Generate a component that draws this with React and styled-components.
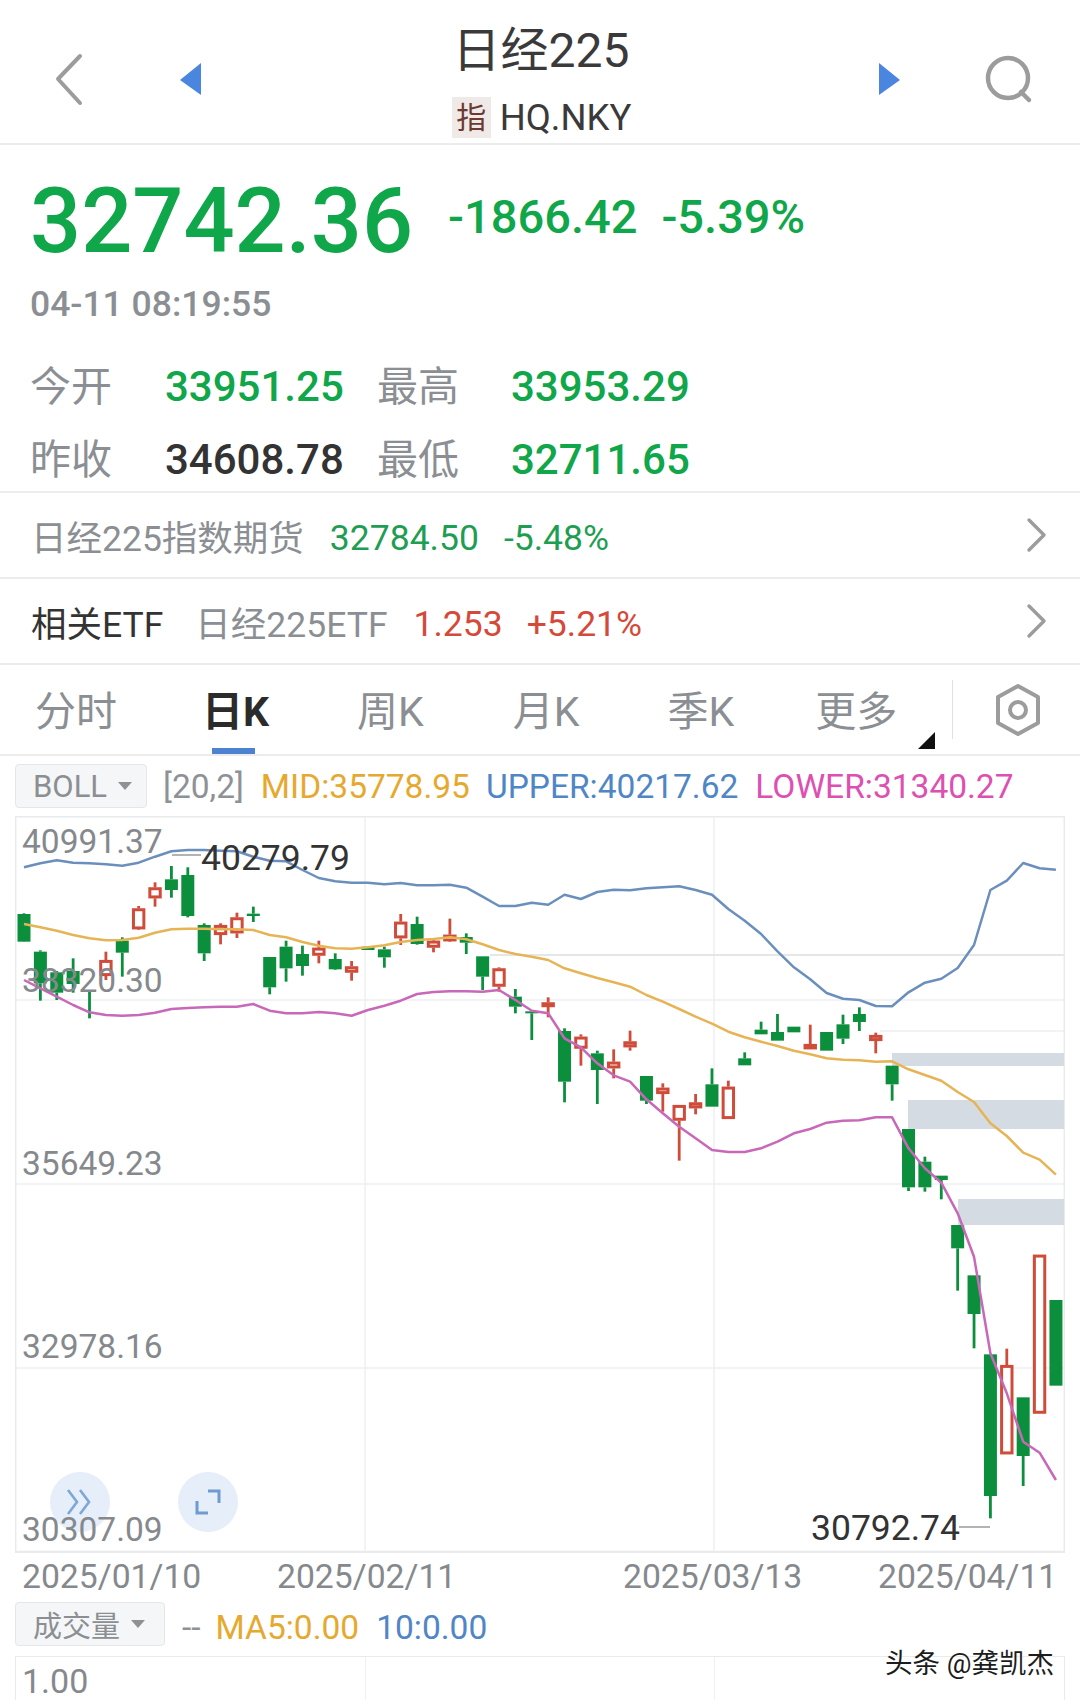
import React from 'react'
import styled, { createGlobalStyle } from 'styled-components'

const GREEN = '#10a64a'
const RED = '#d5493a'
const GREY = '#8b8f93'
const FONT = `Roboto, "Noto Sans CJK SC", sans-serif`

const GlobalStyle = createGlobalStyle`
  html, body { margin: 0; padding: 0; background: #fff; }
  body { font-family: ${FONT}; }
`

// chart values are read at 3x: real y = 810 + v / 3, one entry per trading day
const toX = (i) => 24 + i * 16.38
const toY = (v) => 810 + v / 3

// [colour, high, body top, body bottom, low]
const candles = [
  ['g', 310, 312, 395, 396], ['g', 421, 425, 520, 572], ['g', 483, 487, 548, 570], ['g', 445, 483, 522, 548],
  ['g', 540, 540, 546, 625], ['r', 425, 450, 498, 510], ['g', 382, 392, 428, 500], ['r', 288, 295, 358, 360],
  ['r', 217, 232, 265, 290], ['g', 168, 208, 240, 263], ['g', 172, 195, 318, 322], ['g', 340, 345, 430, 453],
  ['r', 340, 345, 375, 403], ['r', 308, 322, 370, 384], ['g', 290, 311, 318, 336], ['g', 441, 441, 532, 553],
  ['g', 392, 410, 475, 515], ['g', 407, 432, 468, 497], ['r', 392, 413, 437, 460], ['g', 430, 447, 478, 480],
  ['r', 453, 469, 488, 512], ['g', 410, 410, 420, 420], ['g', 410, 418, 442, 473], ['r', 312, 335, 385, 405],
  ['g', 320, 342, 402, 404], ['r', 385, 392, 413, 427], ['r', 326, 374, 394, 396], ['g', 370, 381, 398, 432],
  ['g', 439, 439, 500, 540], ['r', 472, 475, 530, 545], ['g', 537, 560, 590, 610], ['g', 604, 604, 610, 690],
  ['r', 562, 577, 590, 622], ['g', 655, 663, 815, 877], ['r', 673, 680, 716, 767], ['g', 722, 730, 780, 882],
  ['r', 718, 755, 775, 805], ['r', 662, 694, 712, 722], ['g', 798, 798, 872, 882], ['r', 820, 833, 852, 905],
  ['r', 885, 885, 932, 1052], ['r', 852, 877, 895, 913], ['g', 775, 823, 890, 890], ['r', 812, 830, 927, 927],
  ['g', 727, 745, 766, 766], ['g', 635, 659, 673, 673], ['g', 612, 666, 692, 692], ['g', 650, 650, 667, 667],
  ['r', 644, 702, 718, 718], ['g', 666, 666, 722, 722], ['g', 614, 643, 686, 702], ['g', 592, 612, 636, 663],
  ['r', 668, 675, 693, 730], ['g', 767, 767, 823, 872], ['g', 957, 957, 1132, 1143], ['g', 1040, 1055, 1132, 1145],
  ['g', 1097, 1097, 1110, 1168], ['g', 1245, 1245, 1315, 1442], ['g', 1396, 1396, 1512, 1615], ['g', 1633, 1633, 2058, 2125],
  ['r', 1616, 1665, 1933, 1933], ['g', 1762, 1762, 1938, 2028], ['r', 1334, 1334, 1811, 1811], ['g', 1470, 1470, 1727, 1727],
]

const upper = [
  172, 160, 151, 158, 160, 163, 167, 158, 140, 124, 120, 120, 122, 124, 140, 152,
  154, 180, 204, 214, 218, 218, 223, 219, 226, 226, 224, 233, 260, 288, 288, 278,
  284, 254, 267, 246, 239, 241, 235, 232, 229, 240, 254, 297, 332, 372, 424, 472,
  508, 549, 566, 570, 588, 589, 547, 518, 506, 474, 405, 240, 212, 159, 175, 179,
]
const mid = [
  342, 352, 362, 375, 385, 391, 390, 383, 368, 358, 356, 356, 358, 358, 360, 375,
  382, 396, 407, 415, 416, 412, 406, 396, 390, 387, 382, 388, 403, 420, 432, 440,
  450, 475, 490, 504, 517, 530, 555, 575, 597, 620, 641, 665, 682, 695, 708, 722,
  733, 745, 749, 751, 755, 754, 778, 795, 812, 846, 876, 940, 978, 1028, 1049, 1094,
]
const lower = [
  510, 535, 560, 585, 607, 615, 617, 615, 608, 597, 594, 592, 590, 590, 582, 602,
  610, 610, 606, 610, 617, 600, 587, 572, 552, 546, 544, 544, 545, 540, 570, 602,
  610, 685, 712, 760, 796, 815, 868, 910, 950, 985, 1020, 1026, 1026, 1015, 995, 970,
  957, 938, 932, 931, 922, 922, 1015, 1075, 1118, 1210, 1340, 1630, 1750, 1895, 1928, 2010,
]

const pointsOf = (values) => values.map((v, i) => `${toX(i).toFixed(1)},${toY(v).toFixed(1)}`).join(' ')

const axisLabels = [
  ['40991.37', 853], ['38320.30', 992], ['35649.23', 1175], ['32978.16', 1358], ['30307.09', 1541],
]

function Candle({ data, index }) {
  const [colour, high, top, bottom, low] = data
  const x = toX(index)
  const green = colour === 'g'
  const stroke = green ? '#0b8f3d' : '#cf4b3a'
  return (
    <g>
      <line x1={x} x2={x} y1={toY(high)} y2={toY(top)} stroke={stroke} strokeWidth="2.8" />
      <line x1={x} x2={x} y1={toY(bottom)} y2={toY(low)} stroke={stroke} strokeWidth="2.8" />
      {green
        ? <rect x={x - 6.5} y={toY(top)} width="13" height={Math.max(toY(bottom) - toY(top), 2)} fill={stroke} />
        : <rect x={x - 5.2} y={toY(top) + 1.4} width="10.4" height={Math.max(toY(bottom) - toY(top) - 2.8, 2)} fill="#fff" stroke={stroke} strokeWidth="3" />}
    </g>
  )
}

function MainChart() {
  return (
    <Chart viewBox="15 816 1050 737">
      <g stroke="#eef0f2" strokeWidth="1.5" fill="none">
        <path d="M365 816V1552M714 816V1552" />
        <path d="M15 1000H1065M15 1184H1065M15 1368H1065M880 1031H1065" />
      </g>
      <path d="M15.7 816.7H1064.3V1551.5H15.7Z" fill="none" stroke="#e8eaec" strokeWidth="1.5" />
      <path d="M15 1552H1065" stroke="#e8eaec" strokeWidth="2" />
      <path d="M490 955H1065" stroke="#e4e6e8" strokeWidth="2" />
      <g fill="#d5dbe2">
        <rect x="892" y="1053" width="172" height="13" />
        <rect x="908" y="1100" width="156" height="29" />
        <rect x="958" y="1199" width="106" height="26" />
      </g>
      {candles.map((c, i) => <Candle key={i} data={c} index={i} />)}
      <g fill="none" strokeWidth="2.5" strokeLinejoin="round">
        <polyline points={pointsOf(upper)} stroke="#6b8fbd" />
        <polyline points={pointsOf(mid)} stroke="#e6b455" />
        <polyline points={pointsOf(lower)} stroke="#c868b8" />
      </g>
      {axisLabels.map(([label, y]) => (
        <AxisText key={label} x="22" y={y}>{label}</AxisText>
      ))}
      <path d="M172 855H201M959 1527H990" stroke="#9a9a9a" strokeWidth="1.5" />
      <PeakText x="201" y="870">40279.79</PeakText>
      <PeakText x="811" y="1540">30792.74</PeakText>
    </Chart>
  )
}

export default function App() {
  return (
    <>
      <GlobalStyle />
      <Page>
        <Header>
          <svg width="44" height="64" viewBox="0 0 44 64">
            <path d="M31 9 9 32l22 24" fill="none" stroke="#9c9c9c" strokeWidth="4" strokeLinecap="round" strokeLinejoin="round" />
          </svg>
          <svg width="24" height="34" viewBox="0 0 24 34">
            <path d="M23 1V33L2 18Z" fill="#4a86e0" />
          </svg>
          <TitleBlock>
            <Title>日经225</Title>
            <Subtitle><TypeBadge>指</TypeBadge>HQ.NKY</Subtitle>
          </TitleBlock>
          <svg width="24" height="34" viewBox="0 0 24 34">
            <path d="M1 1V33L22 18Z" fill="#4a86e0" />
          </svg>
          <svg width="50" height="50" viewBox="0 0 50 50">
            <g fill="none" stroke="#9c9c9c" strokeWidth="4.5" strokeLinecap="round">
              <ellipse cx="24" cy="24" rx="20" ry="20" />
              <path d="M37 38l8 8" />
            </g>
          </svg>
        </Header>

        <Quote>
          <PriceRow>
            <Price>32742.36</Price>
            <Change>-1866.42</Change>
            <Change>-5.39%</Change>
          </PriceRow>
          <Stamp>04-11 08:19:55</Stamp>
          <Stats>
            <StatLabel>今开</StatLabel>
            <StatValue>33951.25</StatValue>
            <StatLabel>最高</StatLabel>
            <StatValue>33953.29</StatValue>
            <StatLabel>昨收</StatLabel>
            <StatValue $flat>34608.78</StatValue>
            <StatLabel>最低</StatLabel>
            <StatValue>32711.65</StatValue>
          </Stats>
        </Quote>

        <LinkRow>
          <LinkName>日经225指数期货</LinkName>
          <LinkNumber $color="#1e9e52" $left={26}>32784.50</LinkNumber>
          <LinkNumber $color="#1e9e52" $left={25}>-5.48%</LinkNumber>
          <Arrow />
        </LinkRow>
        <LinkRow>
          <LinkName $dark>相关ETF</LinkName>
          <LinkName $left={32}>日经225ETF</LinkName>
          <LinkNumber $color={RED} $left={26}>1.253</LinkNumber>
          <LinkNumber $color={RED} $left={24}>+5.21%</LinkNumber>
          <Arrow />
        </LinkRow>

        <TabBar>
          <Tab $left={35}>分时</Tab>
          <Tab $left={85} $active>日K</Tab>
          <Tab $left={88}>周K</Tab>
          <Tab $left={89}>月K</Tab>
          <Tab $left={88}>季K</Tab>
          <MoreTab $left={81}>更多</MoreTab>
          <TabDivider />
          <SettingsIcon width="46" height="54" viewBox="0 0 46 54">
            <path d="M23 3 43 14V40L23 51 3 40V14Z" fill="none" stroke="#9c9c9c" strokeWidth="4" strokeLinejoin="round" />
            <circle cx="23" cy="27" r="8" fill="none" stroke="#9c9c9c" strokeWidth="4" />
          </SettingsIcon>
        </TabBar>

        <IndicatorRow>
          <Chip $width={132}>BOLL<Caret /></Chip>
          <Legend $color="#8e9296" $left={16}>[20,2]</Legend>
          <Legend $color="#e6a92f" $left={17}>MID:35778.95</Legend>
          <Legend $color="#4f86c6" $left={16}>UPPER:40217.62</Legend>
          <Legend $color="#dd50b2" $left={17}>LOWER:31340.27</Legend>
        </IndicatorRow>

        <ChartPane>
          <MainChart />
          <RoundButton $left={35}>
            <svg width="30" height="28" viewBox="0 0 30 28">
              <path d="M3 2l9 12-9 12M15 2l9 12-9 12" fill="none" stroke="#7ea7d8" strokeWidth="2.6" />
            </svg>
          </RoundButton>
          <RoundButton $left={163}>
            <svg width="26" height="26" viewBox="0 0 26 26">
              <path d="M13 2h11v12M13 24H2V12" fill="none" stroke="#6f9bd0" strokeWidth="3" />
            </svg>
          </RoundButton>
        </ChartPane>

        <DateAxis>
          <span>2025/01/10</span>
          <span>2025/02/11</span>
          <span>2025/03/13</span>
          <span>2025/04/11</span>
        </DateAxis>

        <VolumeRow>
          <Chip $width={150} $cjk>成交量<Caret /></Chip>
          <Legend $color="#8e9296" $left={17}>--</Legend>
          <Legend $color="#e6a92f" $left={15}>MA5:0.00</Legend>
          <Legend $color="#4f86c6" $left={17}>10:0.00</Legend>
        </VolumeRow>

        <VolumePane>
          <VolumeCell>1.00</VolumeCell>
          <VolumeCell />
          <VolumeCell />
        </VolumePane>

        <Watermark>头条 @龚凯杰</Watermark>
      </Page>
    </>
  )
}

function Arrow() {
  return (
    <ArrowIcon width="24" height="36" viewBox="0 0 24 36">
      <path d="M4 3l15 15L4 33" fill="none" stroke="#9c9c9c" strokeWidth="3.4" strokeLinecap="round" strokeLinejoin="round" />
    </ArrowIcon>
  )
}

const Page = styled.div`
  position: relative;
  width: 1080px;
  height: 1701px;
  overflow: hidden;
  background: #fff;
  font-family: ${FONT};
`

const Header = styled.header`
  display: flex;
  align-items: center;
  height: 143px;
  border-bottom: 2px solid #ececec;
  padding-left: 49px;
  > svg:nth-of-type(1) { margin-top: 14px; }
  > svg:nth-of-type(2) { margin: 14px 0 0 85px; }
  > svg:nth-of-type(3) { margin: 14px 0 0 0; }
  > svg:nth-of-type(4) { margin: 14px 0 0 82px; }
`

const TitleBlock = styled.div`
  align-self: flex-start;
  width: 676px;
  display: flex;
  flex-direction: column;
  align-items: center;
  padding-top: 21px;
`

const Title = styled.div`
  font-size: 48px;
  line-height: 60px;
  color: #3a3a3a;
  margin-left: 2px;
`

const Subtitle = styled.div`
  display: flex;
  align-items: center;
  font-size: 36.5px;
  line-height: 41px;
  color: #3a3a3a;
  margin-top: 16px;
  margin-left: 3px;
`

const TypeBadge = styled.span`
  width: 39px;
  height: 41px;
  margin-right: 9px;
  background: #efeae8;
  color: #6b3a33;
  font-size: 30px;
  text-align: center;
`

const Quote = styled.section`
  height: 348px;
  padding: 44px 0 0 30px;
  box-sizing: border-box;
  border-bottom: 2px solid #ececec;
`

const PriceRow = styled.div`
  display: flex;
  align-items: center;
  height: 66px;
  color: ${GREEN};
  gap: 24px;
`

const Price = styled.div`
  font-size: 90px;
  font-weight: 500;
  line-height: 66px;
  margin-right: 11px;
`

const Change = styled.div`
  font-size: 47px;
  font-weight: 500;
  line-height: 60px;
  margin-top: -10px;
`

const Stamp = styled.div`
  margin-top: 32px;
  font-size: 35.5px;
  font-weight: 500;
  line-height: 34px;
  color: ${GREY};
`

const Stats = styled.div`
  display: grid;
  grid-template-columns: 135px 212px 134px auto;
  grid-auto-rows: 66px;
  row-gap: 7px;
  align-items: center;
  margin-top: 32px;
`

const StatLabel = styled.div`
  font-size: 41px;
  margin-top: -6px;
  color: ${GREY};
`

const StatValue = styled.div`
  font-size: 42px;
  font-weight: 500;
  color: ${({ $flat }) => ($flat ? '#333' : GREEN)};
`

const LinkRow = styled.div`
  display: flex;
  align-items: center;
  height: 84px;
  padding-left: 31px;
  border-bottom: 2px solid #ececec;
`

const LinkName = styled.span`
  font-size: 35.5px;
  margin-left: ${({ $left }) => $left || 0}px;
  color: ${({ $dark }) => ($dark ? '#333' : GREY)};
`

const LinkNumber = styled.span`
  font-size: 35.5px;
  margin-top: 5px;
  margin-left: ${({ $left }) => $left}px;
  color: ${({ $color }) => $color};
`

const ArrowIcon = styled.svg`
  margin-left: auto;
  margin-right: 31px;
`

const TabBar = styled.nav`
  position: relative;
  display: flex;
  align-items: flex-start;
  height: 91px;
  box-sizing: border-box;
  border-bottom: 2px solid #ececec;
`

const Tab = styled.div`
  position: relative;
  height: 89px;
  margin-left: ${({ $left }) => $left}px;
  font-size: 41px;
  line-height: 94px;
  font-weight: ${({ $active }) => ($active ? 700 : 400)};
  color: ${({ $active }) => ($active ? '#2b2b2b' : GREY)};
  &::after {
    content: '';
    display: ${({ $active }) => ($active ? 'block' : 'none')};
    position: absolute;
    left: 10px;
    bottom: 0;
    width: 43px;
    height: 6px;
    background: #4c82d0;
  }
`

const MoreTab = styled(Tab)`
  &::after {
    display: block;
    left: 103px;
    bottom: 5px;
    width: 0;
    height: 0;
    background: none;
    border-style: solid;
    border-width: 0 0 17px 17px;
    border-color: transparent transparent #111 transparent;
  }
`

const TabDivider = styled.div`
  position: absolute;
  left: 952px;
  top: 15px;
  width: 1px;
  height: 59px;
  background: #dfe0e2;
`

const SettingsIcon = styled.svg`
  position: absolute;
  left: 995px;
  top: 18px;
`

const IndicatorRow = styled.div`
  display: flex;
  align-items: center;
  height: 60px;
  padding-left: 15px;
`

const Chip = styled.div`
  display: flex;
  align-items: center;
  box-sizing: border-box;
  width: ${({ $width }) => $width}px;
  height: 44px;
  padding-left: 17px;
  background: #f5f6f8;
  border: 1.5px solid #e4e6ea;
  border-radius: 4px;
  font-size: ${({ $cjk }) => ($cjk ? 29 : 31)}px;
  color: ${GREY};
`

const Caret = styled.i`
  width: 0;
  height: 0;
  margin-left: 11px;
  border-style: solid;
  border-width: 8px 7px 0 7px;
  border-color: #8e9296 transparent transparent transparent;
`

const Legend = styled.span`
  font-size: 33.5px;
  margin-left: ${({ $left }) => $left}px;
  color: ${({ $color }) => $color};
`

const ChartPane = styled.div`
  position: relative;
  width: 1050px;
  height: 737px;
  margin-left: 15px;
`

const Chart = styled.svg`
  position: relative;
  z-index: 1;
  display: block;
  width: 1050px;
  height: 737px;
`

const AxisText = styled.text`
  font-size: 33.5px;
  fill: #85898d;
`

const PeakText = styled.text`
  font-size: 35.5px;
  fill: #333;
`

const RoundButton = styled.div`
  position: absolute;
  left: ${({ $left }) => $left}px;
  top: 656px;
  display: flex;
  align-items: center;
  justify-content: center;
  width: 60px;
  height: 60px;
  border-radius: 50%;
  background: #e6eef9;
`

const DateAxis = styled.div`
  display: grid;
  grid-template-columns: 255px 346px 255px auto;
  align-items: center;
  height: 46px;
  padding-left: 22px;
  font-size: 33.7px;
  color: #85898d;
`

const VolumeRow = styled.div`
  display: flex;
  align-items: flex-start;
  height: 54px;
  margin-top: 3px;
  padding-left: 15px;
  > span { line-height: 52px; }
`

const VolumePane = styled.div`
  display: grid;
  grid-template-columns: 350px 349px 351px;
  height: 44px;
  margin-left: 15px;
  border: 1.5px solid #e8eaec;
  border-bottom: 0;
  box-sizing: border-box;
  width: 1050px;
`

const VolumeCell = styled.div`
  padding: 7px 0 0 6px;
  font-size: 34px;
  line-height: 34px;
  color: #85898d;
  border-right: 1.5px solid #eef0f2;
  &:last-child { border-right: 0; }
`

const Watermark = styled.div`
  position: absolute;
  left: 885px;
  top: 1647px;
  font-size: 27.5px;
  line-height: 34px;
  white-space: nowrap;
  color: #1c1c1c;
  text-shadow: 0 0 2px #fff, 0 0 2px #fff;
`
